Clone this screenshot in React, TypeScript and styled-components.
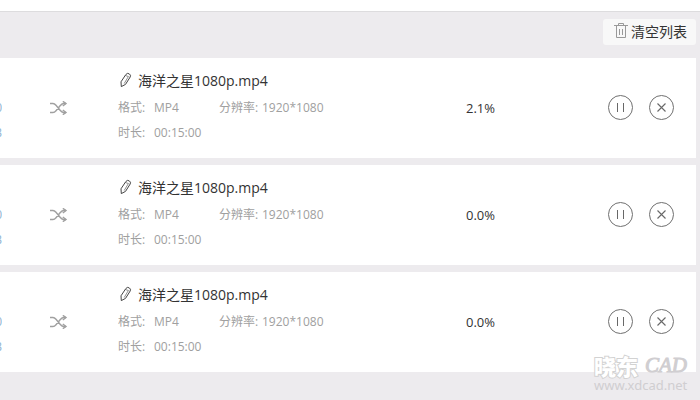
import React from 'react';
import styled, { createGlobalStyle } from 'styled-components';

const GlobalStyle = createGlobalStyle`
  * { box-sizing: border-box; }
  body {
    margin: 0;
    background: #edebee;
    color: #333;
    font-family: "Open Sans", "Noto Sans CJK SC", sans-serif;
    font-size: 14px;
    overflow: hidden;
  }
  button {
    font: inherit;
    color: inherit;
    padding: 0;
    cursor: pointer;
  }
  svg { display: block; flex: none; }
`;

const Page = styled.main`
  position: relative;
  min-height: 100vh;
`;

const TopStrip = styled.header`
  height: 12px;
  background: #fff;
  border-bottom: 1px solid #dddcde;
`;

const Toolbar = styled.div`
  display: flex;
  justify-content: flex-end;
  align-items: center;
  height: 46px;
  padding: 0 4px 6px 0;
`;

const ClearButton = styled.button`
  display: flex;
  align-items: center;
  gap: 3px;
  height: 26px;
  padding: 0 9px 0 11px;
  border: 0;
  border-radius: 3px;
  background: #f8f8f8;
  line-height: 26px;

  svg { margin-bottom: 2px; }
`;

const TaskList = styled.ul`
  display: flex;
  flex-direction: column;
  gap: 7px;
  margin: 0;
  padding: 0 4px 0 0;
  list-style: none;
`;

const TaskRow = styled.li`
  display: grid;
  grid-template-columns: 2px 116px minmax(0, 348px) 1fr auto;
  align-items: center;
  height: 100px;
  padding-right: 22px;
  background: #fff;
`;

const SourceEdge = styled.div`
  display: flex;
  flex-direction: column;
  align-items: flex-end;
  align-self: start;
  padding-top: 37px;
  overflow: hidden;
  color: #8fb4d2;
  font-size: 12px;
  line-height: 25px;
`;

const ConvertCell = styled.div`
  display: flex;
  padding-left: 48px;
  color: #a0a0a0;
`;

const Info = styled.div`
  align-self: start;
  padding-top: 9px;
`;

const FileName = styled.div`
  display: flex;
  align-items: center;
  gap: 5px;
  height: 28px;
  line-height: 27px;
  padding-bottom: 1px;
  white-space: nowrap;
`;

const EditButton = styled.button`
  border: 0;
  background: none;

  svg { margin-bottom: 2px; }
`;

const Details = styled.dl`
  display: grid;
  grid-template-columns: 101px 1fr;
  margin: 0;
  color: #a0a0a0;
  font-size: 12px;
  line-height: 25px;
`;

const Detail = styled.div<{ $labelWidth: number }>`
  display: grid;
  grid-template-columns: ${(p) => p.$labelWidth}px auto;
  height: 25px;
  white-space: nowrap;

  dd { margin: 0; }
`;

const Progress = styled.output`
  font-size: 13px;
`;

const Actions = styled.div`
  display: flex;
  gap: 16px;
  padding-bottom: 2px;
`;

const RoundButton = styled.button`
  display: grid;
  place-items: center;
  width: 25px;
  height: 25px;
  border: 1px solid #707070;
  border-radius: 50%;
  background: #fff;
  color: #686868;
`;

const Watermark = styled.div`
  position: absolute;
  right: 10px;
  bottom: 7px;
  width: 96px;
  color: #d0ced1;
  pointer-events: none;
`;

const WatermarkBrand = styled.div`
  display: flex;
  justify-content: space-between;
  align-items: center;
  height: 24px;
  line-height: 24px;
`;

const BrandName = styled.span`
  color: #fff;
  font-family: "Noto Sans CJK SC", sans-serif;
  font-size: 22px;
  font-weight: 900;
  -webkit-text-stroke: 2px #d2d2d2;
  paint-order: stroke fill;
`;

const BrandTag = styled.span`
  padding-right: 3px;
  font-family: "Liberation Serif", serif;
  font-size: 21px;
  font-style: italic;
  -webkit-text-stroke: 1px #d0ced1;
`;

const WatermarkSite = styled.div`
  font-family: "Noto Sans", sans-serif;
  font-size: 13px;
  line-height: 16px;
`;

const TrashIcon = () => (
  <svg width="14" height="16" viewBox="0 0 14 16" fill="none" stroke="#999">
    <path d="M0 2.5H14M4.5 2V.5H9.5V2M2.5 3V14.5H11.5V3M5.5 6V12M8.5 6V12" />
  </svg>
);

const PencilIcon = () => (
  <svg width="15" height="16" viewBox="0 0 15 16" fill="none" stroke="#444" strokeLinejoin="round">
    <path d="M3 9.8L7.8 2.6Q9.3.6 11.2 1.8Q13.2 3 12.2 5L7.5 12.4L3.3 14.6Z" />
    <path d="M7.3 3.5L10.4 4.5L6.2 11.5" strokeWidth=".6" />
  </svg>
);

const ShuffleIcon = () => (
  <svg width="18" height="14" viewBox="0 0 18 14" fill="none" stroke="currentColor" strokeWidth="1.4">
    <path d="M0 2.5H3Q4.5 2.5 6 4.3L10.3 9.5Q12 11.5 14 11.5H16M0 11.5H3Q4.5 11.5 6 9.7L10.3 4.5Q12 2.5 14 2.5H16" />
    <path d="M12.8 .3L16 2.5L12.8 5M12.8 9L16 11.5L12.8 13.7" />
  </svg>
);

const PauseIcon = () => (
  <svg width="9" height="9" viewBox="0 0 9 9" stroke="currentColor">
    <path d="M1.5 0V9M7.5 0V9" />
  </svg>
);

const CloseIcon = () => (
  <svg width="9" height="9" viewBox="0 0 9 9" stroke="currentColor" strokeWidth="1.1">
    <path d="M.5.5L8.5 8.5M8.5.5L.5 8.5" />
  </svg>
);

const tasks = [
  { id: 1, progress: '2.1%' },
  { id: 2, progress: '0.0%' },
  { id: 3, progress: '0.0%' },
];

export default function App() {
  return (
    <Page>
      <GlobalStyle />
      <TopStrip />
      <Toolbar>
        <ClearButton type="button">
          <TrashIcon />
          清空列表
        </ClearButton>
      </Toolbar>
      <TaskList>
        {tasks.map((task) => (
          <TaskRow key={task.id}>
            <SourceEdge>
              <span>0</span>
              <span>B</span>
            </SourceEdge>
            <ConvertCell>
              <ShuffleIcon />
            </ConvertCell>
            <Info>
              <FileName>
                <EditButton type="button" aria-label="重命名">
                  <PencilIcon />
                </EditButton>
                海洋之星1080p.mp4
              </FileName>
              <Details>
                <Detail $labelWidth={36}>
                  <dt>格式:</dt>
                  <dd>MP4</dd>
                </Detail>
                <Detail $labelWidth={43}>
                  <dt>分辨率:</dt>
                  <dd>1920*1080</dd>
                </Detail>
                <Detail $labelWidth={36}>
                  <dt>时长:</dt>
                  <dd>00:15:00</dd>
                </Detail>
              </Details>
            </Info>
            <Progress>{task.progress}</Progress>
            <Actions>
              <RoundButton type="button" aria-label="暂停">
                <PauseIcon />
              </RoundButton>
              <RoundButton type="button" aria-label="移除">
                <CloseIcon />
              </RoundButton>
            </Actions>
          </TaskRow>
        ))}
      </TaskList>
      <Watermark>
        <WatermarkBrand>
          <BrandName>晓东</BrandName>
          <BrandTag>CAD</BrandTag>
        </WatermarkBrand>
        <WatermarkSite>www.xdcad.net</WatermarkSite>
      </Watermark>
    </Page>
  );
}
